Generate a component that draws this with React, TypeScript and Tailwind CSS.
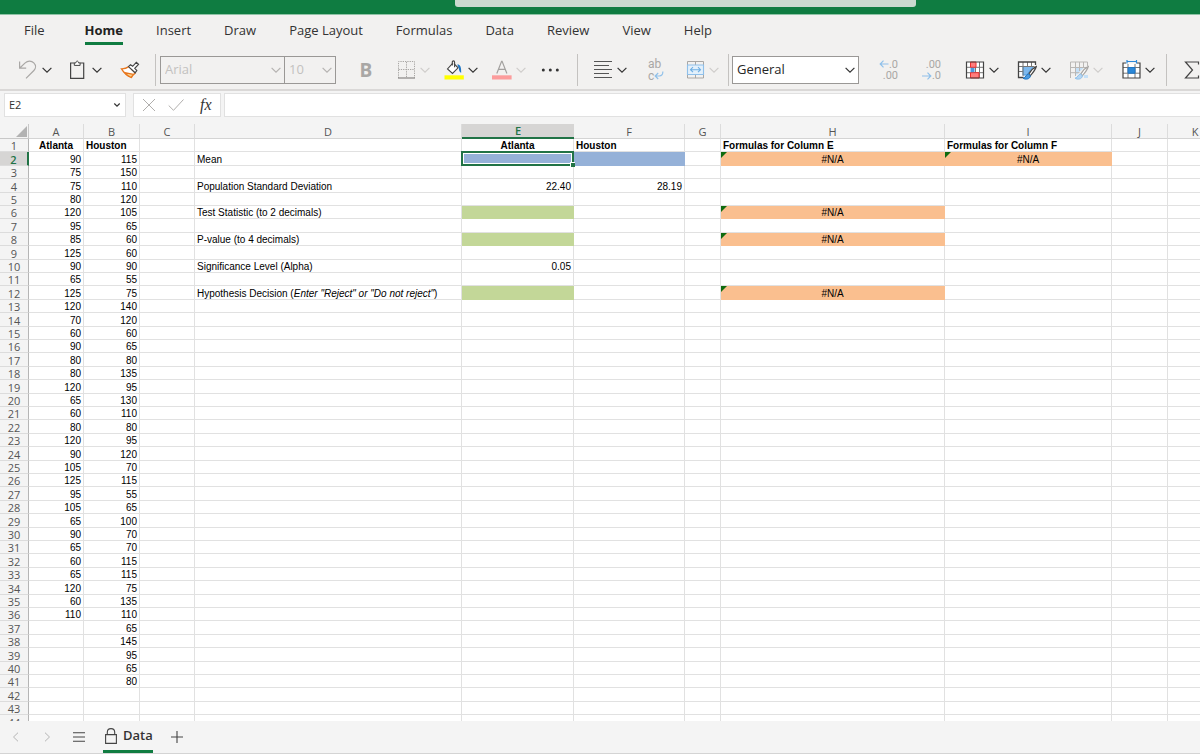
import type { ReactNode } from "react";

const UI = "font-['Open_Sans','Noto_Sans',sans-serif]";

type Cell = {
  text?: ReactNode;
  fill?: "blue" | "green" | "orange";
  align?: "left" | "center" | "right";
  bold?: boolean;
  error?: boolean;
  selected?: boolean;
};

const columns = [
  { name: "A", width: "w-[55px]" },
  { name: "B", width: "w-[56px]" },
  { name: "C", width: "w-[55px]" },
  { name: "D", width: "w-[267px]" },
  { name: "E", width: "w-[112px]" },
  { name: "F", width: "w-[111px]" },
  { name: "G", width: "w-[36px]" },
  { name: "H", width: "w-[224px]" },
  { name: "I", width: "w-[167px]" },
  { name: "J", width: "w-[56px]" },
  { name: "K", width: "w-[55px]" },
];

const rowHeights = ["h-[13px]", "h-[14px]", "h-[13px]", "h-[14px]", "h-[13px]"];

const atlanta = [
  90, 75, 75, 80, 120, 95, 85, 125, 90, 65, 125, 120, 70, 60, 90, 80, 80, 120, 65, 60, 80, 120, 90,
  105, 125, 95, 105, 65, 90, 65, 60, 65, 120, 60, 110,
];
const houston = [
  115, 150, 110, 120, 105, 65, 60, 60, 90, 55, 75, 140, 120, 60, 65, 80, 135, 95, 130, 110, 80, 95,
  120, 70, 115, 55, 65, 100, 70, 70, 115, 115, 75, 135, 110, 65, 145, 95, 65, 80,
];

const cells: Record<string, Cell> = {
  A1: { text: "Atlanta", bold: true, align: "center" },
  B1: { text: "Houston", bold: true },
  E1: { text: "Atlanta", bold: true, align: "center" },
  F1: { text: "Houston", bold: true },
  H1: { text: "Formulas for Column E", bold: true },
  I1: { text: "Formulas for Column F", bold: true },
  D2: { text: "Mean" },
  E2: { fill: "blue", selected: true },
  F2: { fill: "blue" },
  H2: { text: "#N/A", fill: "orange", align: "center", error: true },
  I2: { text: "#N/A", fill: "orange", align: "center", error: true },
  D4: { text: "Population Standard Deviation" },
  E4: { text: "22.40", align: "right" },
  F4: { text: "28.19", align: "right" },
  D6: { text: "Test Statistic (to 2 decimals)" },
  E6: { fill: "green" },
  H6: { text: "#N/A", fill: "orange", align: "center", error: true },
  D8: { text: "P-value (to 4 decimals)" },
  E8: { fill: "green" },
  H8: { text: "#N/A", fill: "orange", align: "center", error: true },
  D10: { text: "Significance Level (Alpha)" },
  E10: { text: "0.05", align: "right" },
  D12: {
    text: (
      <>
        Hypothesis Decision (<i>Enter "Reject" or "Do not reject"</i>)
      </>
    ),
  },
  E12: { fill: "green" },
  H12: { text: "#N/A", fill: "orange", align: "center", error: true },
};

function getCell(col: string, row: number): Cell {
  const found = cells[col + row];
  if (found) return found;
  if (col === "A" && row >= 2) return { text: atlanta[row - 2], align: "right" };
  if (col === "B" && row >= 2) return { text: houston[row - 2], align: "right" };
  return {};
}

const fills = {
  none: "border-[#e1e1e1]",
  blue: "bg-[#95b1d8] border-[#95b1d8]",
  green: "bg-[#c3d798] border-[#c3d798]",
  orange: "bg-[#fabf8f] border-[#fabf8f]",
};
const aligns = { left: "text-left", center: "text-center", right: "text-right" };

function SheetCell({ cell }: { cell: Cell }) {
  return (
    <td
      className={`relative border-r border-b px-0.5 pt-0.5 pb-0 leading-[10px] whitespace-nowrap ${fills[cell.fill ?? "none"]} ${aligns[cell.align ?? "left"]} ${cell.bold ? "font-bold" : ""}`}
    >
      {cell.text}
      {cell.error && (
        <span className="absolute top-0 left-0 border-t-[6px] border-r-[6px] border-t-[#0f6b0f] border-r-transparent" />
      )}
      {cell.selected && (
        <span className="absolute -inset-px z-10 border-2 border-[#217346]">
          <span className="absolute inset-0 border border-white" />
          <span className="absolute -right-[3px] -bottom-[3px] size-[5px] border-t border-l border-white bg-[#217346]" />
        </span>
      )}
    </td>
  );
}

function Chevron({ className = "text-[#333]" }: { className?: string }) {
  return (
    <svg viewBox="0 0 10 10" className={`size-[10px] shrink-0 ${className}`} fill="none" stroke="currentColor" strokeWidth="1.2">
      <path d="M.6 2.8 5 7.2l4.4-4.4" />
    </svg>
  );
}

function Tool({ label, children, chevron, wide }: { label: string; children: ReactNode; chevron?: string; wide?: boolean }) {
  return (
    <button type="button" aria-label={label} className="flex h-7 shrink-0 items-center gap-1">
      <svg viewBox={wide ? "0 0 24 20" : "0 0 20 20"} className={wide ? "h-5 w-6" : "size-5"} fill="none" strokeWidth="1">
        {children}
      </svg>
      {chevron && <Chevron className={chevron} />}
    </button>
  );
}

function Separator() {
  return <span className="h-8 w-px shrink-0 bg-[#c4c2c0]" />;
}

const dark = "text-[#333]";
const pale = "text-[#cfcdcb]";

function Ribbon() {
  return (
    <div role="toolbar" aria-label="Home" className="flex h-[39px] items-center overflow-hidden">
      <div className="flex items-center gap-4 pr-[13px] pl-[18px]">
        <Tool label="Undo" chevron={dark}>
          <path stroke="#a9a7a5" strokeWidth="1.2" d="M1.6 1.5v6.6h6.6M1.8 8 7.2 2.9C9.6.7 13.5.6 15.8 2.9s2.2 5.5.1 7.6L8 18.4" />
        </Tool>
        <Tool label="Paste" chevron={dark}>
          <path stroke="#444" strokeWidth="1.2" d="M6.5 3H2.6v15.4h13.1V3h-3.8" />
          <path stroke="#444" fill="#fff" d="M6.3 5.4V2.9h1.6C8 1.7 8.5 1.1 9.2 1.1s1.2.6 1.3 1.8h1.6v2.5z" />
        </Tool>
        <Tool label="Format painter" wide>
          <path fill="#fff" stroke="#e8771f" strokeWidth="1.3" d="M3.500 8.800c3 .1 5.400-.8 7.400-2.200l6.300 6.300c-1.700 1.400-3 2.800-3.800 4.600C9.500 16 6 13 3.500 8.800z" />
          <path fill="#fbd38c" stroke="#e8771f" strokeWidth="1.2" d="m6.800 12.600 8.600 1.800c-1 .9-1.600 1.900-2.100 3.100-2.600-1.100-4.800-2.700-6.500-4.900z" />
          <path fill="#fff" stroke="#444" strokeWidth="1.2" d="m10.500 6.600 2-1.900 2.200 1.600 3.600-3.900 2.200 2-3.700 3.900 2 2.300-1.700 2.200z" />
        </Tool>
      </div>
      <Separator />
      <div className="flex items-center gap-5 pr-[17px] pl-1">
        <div className="flex h-7 w-44 border border-[#9a9896] text-[13px] text-[#c3c1bf]">
          <div className="relative flex grow items-center border-r border-[#9a9896]">
            <select aria-label="Font" disabled className="h-full w-full appearance-none pl-1 opacity-100">
              <option>Arial</option>
            </select>
            <Chevron className="pointer-events-none absolute right-[3px] text-[#b5b3b1]" />
          </div>
          <div className="relative flex w-[50px] items-center">
            <select aria-label="Font size" disabled className="h-full w-full appearance-none pl-1 opacity-100">
              <option>10</option>
            </select>
            <Chevron className="pointer-events-none absolute right-[3px] text-[#b5b3b1]" />
          </div>
        </div>
        <button type="button" className="w-5 text-[19px] leading-7 font-bold text-[#a9a7a5]">B</button>
        <div className="flex items-center gap-[14px]">
          <Tool label="Borders" chevron={pale}>
            <path stroke="#a9a7a5" strokeDasharray="1.300 1" d="M2.500 18V1.500h16V18M10.500 2v16M2.500 9.500h16" />
            <path stroke="#8f8d8b" strokeWidth="1.300" d="M2 18h17" />
          </Tool>
          <Tool label="Fill color" chevron={dark}>
            <path fill="#ff0" d="M.5 15.300h19.300v4.200H.5z" />
            <path fill="#fff" stroke="#444" strokeWidth="1.100" d="M8.600 3.300 3.500 8.900l5 4.600 5.600-5.700-4.200-4.100" />
            <path stroke="#444" strokeWidth="1.100" d="M8.300 5.500V2.200c0-1.800 2.300-1.800 2.300 0v5" />
            <path fill="#1e75c4" d="M13.200 4.600c2.700-.2 4.200 1.700 4 8.200-1.500-.6-2.300-2-2.300-4.600z" />
          </Tool>
          <Tool label="Font color" chevron={pale}>
            <path fill="#fc9c9c" d="M0 15.300h19.600v4.200H0z" />
            <path stroke="#a3a19f" strokeWidth="1.200" d="M4.800 13.500 9.600 1.300h.5l4.800 12.200M6.500 9.300h6.800" />
          </Tool>
          <Tool label="More options">
            <circle cx="3.300" cy="10" r="1.500" fill="#333" />
            <circle cx="10.300" cy="10" r="1.500" fill="#333" />
            <circle cx="17.300" cy="10" r="1.500" fill="#333" />
          </Tool>
        </div>
      </div>
      <Separator />
      <div className="flex items-center gap-[19px] pr-[9px] pl-[15px]">
        <Tool label="Align" chevron={dark}>
          <path stroke="#555" strokeWidth="1.200" d="M1 1.500h18M1 5.500h15M1 9.500h18M1 13.500h15M1 17.500h18" />
        </Tool>
        <button
          type="button"
          aria-label="Wrap text"
          className="relative h-7 w-5 pl-0.5 text-left font-[Roboto,sans-serif] text-[12px] leading-[12px] text-[#a9a7a5]"
        >
          <span className="block">ab</span>
          <span className="block">c</span>
          <svg viewBox="0 0 10 9" className="absolute right-0.5 bottom-1 h-[9px] w-[10px]" fill="none" stroke="#8fc0ea" strokeWidth="1.200">
            <path d="M8.700.5c.7 2.500-1 4.500-3.500 4.500H1.200M4.200 2 1.200 5l3 3" />
          </svg>
        </button>
        <Tool label="Merge cells" chevron={pale}>
          <path stroke="#a9a7a5" d="M2.500 5V1.500h16V5M2.500 14.500V18h16v-3.500M10.500 1.500V5M10.500 14.500V18" />
          <path fill="#e3f0fb" stroke="#8fc0ea" strokeWidth="1.100" d="M2.500 5h16v9.500h-16z" />
          <path stroke="#6eaee3" strokeWidth="1.100" d="M5.500 9.700h10M8 7.200 5.500 9.700 8 12.200M13 7.200l2.500 2.500L13 12.200" />
        </Tool>
      </div>
      <Separator />
      <div className="flex items-center gap-5 pr-[11px] pl-[3px]">
        <div className="relative flex h-7 w-[127px] shrink-0 items-center border border-[#9a9896] bg-white text-[13px] text-[#262626]">
          <select aria-label="Number format" className="h-full w-full appearance-none pl-1">
            <option>General</option>
          </select>
          <Chevron className="pointer-events-none absolute right-[3px] text-[#333]" />
        </div>
        <div className="flex items-center gap-[23px]">
          <button
            type="button"
            aria-label="Increase decimal"
            className="relative w-5 pr-px text-right font-[Roboto,sans-serif] text-[11px] leading-[11px] text-[#a9a7a5]"
          >
            <span className="block">.0</span>
            <span className="block">.00</span>
            <svg viewBox="0 0 11 8" className="absolute top-px left-0 h-2 w-[11px]" fill="none" stroke="#8fc0ea" strokeWidth="1.200">
              <path d="M9.500 4H1.200M4.500.7 1.200 4l3.300 3.300" />
            </svg>
          </button>
          <button
            type="button"
            aria-label="Decrease decimal"
            className="relative w-5 pr-px text-right font-[Roboto,sans-serif] text-[11px] leading-[11px] text-[#a9a7a5]"
          >
            <span className="block">.00</span>
            <span className="block">.0</span>
            <svg viewBox="0 0 11 8" className="absolute bottom-px left-0 h-2 w-[11px]" fill="none" stroke="#8fc0ea" strokeWidth="1.200">
              <path d="M0 4h8.800M5.500.7 8.800 4 5.500 7.300" />
            </svg>
          </button>
          <div className="flex items-center gap-[18px]">
            <Tool label="Conditional formatting" chevron={dark}>
              <path fill="#fff" d="M1.500 2h17v16h-17z" />
              <path stroke="#777" d="M6.500 2v16M10.500 2v16M14.500 2v16M1.500 7.300h17M1.500 12.700h17" />
              <path fill="#ff7d7d" stroke="#ed2f2f" d="M5.500 2h5.500v5.300H5.500zM5.500 12.700h8.500V18H5.500z" />
              <path fill="#4d9be0" d="M5.500 7.800h4v4.400h-4z" />
              <path stroke="#444" strokeWidth="1.200" d="M1.500 2h17v16h-17z" />
            </Tool>
            <Tool label="Format as table" chevron={dark}>
              <path fill="#fff" d="M1.500 2h17v4.500h-17zM1.500 6h4.500v12H1.500z" />
              <path fill="#7db8ed" stroke="#4d9be0" d="M6 6.500h10.500L9.500 15H6z" />
              <path stroke="#777" d="M1.500 6.500h16M6 2v14M10.500 2v4M14.500 2v4M1.500 11.500H6" />
              <path stroke="#444" strokeWidth="1.300" d="M6.500 17.500h-5V2h17v3" />
              <path fill="#fff" stroke="#444" strokeWidth="1.200" d="M19.300 6.500c-3 1.500-5.800 4.500-7.600 7.600l1.700 1.500c2.500-2.800 5-5.800 5.900-9.100z" />
              <path fill="#4d9be0" stroke="#1e75c4" d="M11.500 14c-2.500.2-2.300 3.600-5.500 4.200 2.200 1.600 7.200 1.300 7.400-2.500z" />
            </Tool>
            <Tool label="Cell styles" chevron={pale}>
              <path fill="#c5e0f7" d="M6.500 7.500H15l-7 7H6.500zM15 15h4v3h-4z" />
              <path stroke="#b9b7b5" d="M1.500 18V2h17v4M1.500 7.500h17M1.500 12.700h9M6.500 2v14M10.500 2v9M14.500 2v6" />
              <path fill="#fff" stroke="#a9a7a5" strokeWidth="1.200" d="M19.300 6.500c-3 1.500-5.800 4.500-7.600 7.600l1.700 1.500c2.500-2.800 5-5.800 5.900-9.100z" />
              <path fill="#b5d6f3" stroke="#8fc0ea" d="M11.500 14c-2.500.2-2.300 3.600-5.500 4.200 2.200 1.600 7.200 1.300 7.400-2.500z" />
            </Tool>
            <Tool label="Insert cells" chevron={dark}>
              <path fill="#fff" d="M2 3.500h17V18H2z" />
              <path stroke="#777" d="M7 4v14M14 4v14M2 7.500h17M2 13.200h17" />
              <path fill="#2b88d8" stroke="#1e75c4" d="M7 7.500h7v5.700H7z" />
              <path stroke="#444" strokeWidth="1.200" d="M5 3H2v15h17V3h-3" />
              <path stroke="#2b88d8" strokeWidth="1.200" d="M6 1.500h9.500M6 0v3.500M15.500 0v3.500" />
            </Tool>
          </div>
        </div>
      </div>
      <Separator />
      <div className="pl-4">
        <Tool label="AutoSum">
          <path stroke="#444" strokeWidth="1.200" d="M15.500 4.500V2h-13l7 8-7 8h13v-2.500" />
        </Tool>
      </div>
    </div>
  );
}

const tabs = ["Home", "Insert", "Draw", "Page Layout", "Formulas", "Data", "Review", "View", "Help"];

function FormulaBar() {
  return (
    <div className="flex h-[26px] shrink-0 items-end gap-[3px] pl-1">
      <div className="mr-1 flex h-6 w-[122px] shrink-0 items-center border border-[#e1e1e1] bg-white pr-1">
        <input aria-label="Name box" defaultValue="E2" className="w-full min-w-0 pl-1 text-[11px] text-[#333]" />
        <svg viewBox="0 0 8 8" className="size-2 shrink-0" fill="none" stroke="#333" strokeWidth="1.200">
          <path d="m1.300 2.500 2.700 2.700 2.700-2.700" />
        </svg>
      </div>
      <div className="flex h-6 w-[88px] shrink-0 items-center gap-3 border border-[#e1e1e1] bg-white pl-2">
        <button type="button" aria-label="Cancel">
          <svg viewBox="0 0 14 14" className="size-[14px]" fill="none" stroke="#b0aeac">
            <path d="m1 1 12 12M13 1 1 13" />
          </svg>
        </button>
        <button type="button" aria-label="Enter">
          <svg viewBox="0 0 16 14" className="h-[14px] w-4" fill="none" stroke="#b0aeac">
            <path d="m.7 7.500 4.800 4.800L15.500 1.500" />
          </svg>
        </button>
        <button type="button" aria-label="Insert function" className="pl-1 font-['Liberation_Serif',serif] text-[16px] leading-5 text-[#333] italic">
          fx
        </button>
      </div>
      <input aria-label="Formula" className="h-6 min-w-0 grow border border-r-0 border-[#e1e1e1] bg-white px-2 text-[11px]" />
    </div>
  );
}

function Sheet() {
  const rows = Array.from({ length: 44 }, (_, i) => i + 1);
  return (
    <div className="min-h-0 grow overflow-hidden pt-[7px]">
      <table className="w-[1223px] table-fixed border-separate border-spacing-0 bg-white font-['Liberation_Sans',Arial,sans-serif] text-[10px] text-black">
        <thead>
          <tr className={`h-[15px] bg-[#f4f4f4] text-[11px] leading-[13px] text-[#555] ${UI}`}>
            <th aria-label="Select all" className="w-[29px] border-r border-b border-[#c8c8c8] p-0">
              <svg viewBox="0 0 11 11" className="mr-px ml-auto size-[11px]">
                <path fill="#b3b3b3" d="M11 0v11H0z" />
              </svg>
            </th>
            {columns.map((c) => (
              <th
                key={c.name}
                scope="col"
                className={`p-0 ${c.width} ${c.name === "E" ? "border-b-2 border-[#217346] bg-[#d6d5d4] font-semibold text-[#217346]" : "border-r border-b border-r-[#dcdcdc] border-b-[#d4d4d4] font-normal"}`}
              >
                {c.name}
              </th>
            ))}
          </tr>
        </thead>
        <tbody>
          {rows.map((r) => (
            <tr key={r} className={rowHeights[(r - 1) % 5]}>
              <th
                scope="row"
                className={`border-b border-b-[#dcdcdc] px-0 pt-0.5 pb-0 text-[11px] leading-[10px] ${UI} ${r === 2 ? "border-r-2 border-r-[#217346] bg-[#d6d5d4] font-semibold text-[#217346]" : "border-r border-r-[#b5b5b5] bg-[#f4f4f4] font-normal text-[#555]"}`}
              >
                {r}
              </th>
              {columns.map((c) => (
                <SheetCell key={c.name} cell={getCell(c.name, r)} />
              ))}
            </tr>
          ))}
        </tbody>
      </table>
    </div>
  );
}

export default function App() {
  return (
    <div className={`flex h-screen flex-col overflow-hidden bg-[#f4f4f4] ${UI}`}>
      <header className="flex h-[15px] shrink-0 justify-center border-b border-[#8fc3a6] bg-[#0f7c41]">
        <input aria-label="Search" className="ml-[171px] h-[7px] w-[461px] rounded-b-[3px] bg-[#cadacf]" />
      </header>
      <div className="shrink-0 border-b-2 border-[#dad8d7] bg-[#f2f1f0]">
        <nav className="flex h-[35px] items-start gap-10 pt-1.5 pl-6 text-[13px] leading-[18px] text-[#333]">
          <a href="#file">File</a>
          <div className="flex gap-[33px]">
            {tabs.map((t) => (
              <a
                key={t}
                href={"#" + t.toLowerCase().replace(" ", "-")}
                className={`whitespace-nowrap ${t === "Home" ? "border-b-[3px] border-[#107c41] pb-[3px] font-bold text-[#222]" : ""}`}
              >
                {t}
              </a>
            ))}
          </div>
        </nav>
        <Ribbon />
      </div>
      <FormulaBar />
      <Sheet />
      <footer className="flex h-[33px] shrink-0 items-start border-b border-[#d4d4d4] pl-[11px] text-[#333]">
        <div className="flex h-8 items-center gap-[21px]">
          <button type="button" aria-label="Previous sheet">
            <svg viewBox="0 0 10 10" className="size-[10px]" fill="none" stroke="#b5b5b5">
              <path d="M7 .7 2.500 5 7 9.300" />
            </svg>
          </button>
          <button type="button" aria-label="Next sheet">
            <svg viewBox="0 0 10 10" className="size-[10px]" fill="none" stroke="#b5b5b5">
              <path d="M3 .7 7.500 5 3 9.300" />
            </svg>
          </button>
          <button type="button" aria-label="All sheets">
            <svg viewBox="0 0 12 10" className="h-[10px] w-3" fill="none" stroke="#444" strokeWidth="1.100">
              <path d="M0 .8h12M0 5h12M0 9.200h12" />
            </svg>
          </button>
        </div>
        <button
          type="button"
          className="ml-[18px] flex h-8 items-center gap-1.5 border-b-[3px] border-[#107c41] pl-0.5 text-[13px] font-semibold"
        >
          <svg viewBox="0 0 12 16" className="h-4 w-3" fill="none" stroke="#444" strokeWidth="1.100">
            <path d="M.6 6.600h10.800v8.800H.6zM2.300 6.600V4.300C2.300 2 3.900.6 6 .6s3.700 1.400 3.700 3.700v2.300" />
          </svg>
          Data
        </button>
        <button type="button" aria-label="New sheet" className="ml-[18px] flex h-8 items-center">
          <svg viewBox="0 0 12 12" className="size-3" fill="none" stroke="#444" strokeWidth="1.100">
            <path d="M6 0v12M0 6h12" />
          </svg>
        </button>
      </footer>
    </div>
  );
}
